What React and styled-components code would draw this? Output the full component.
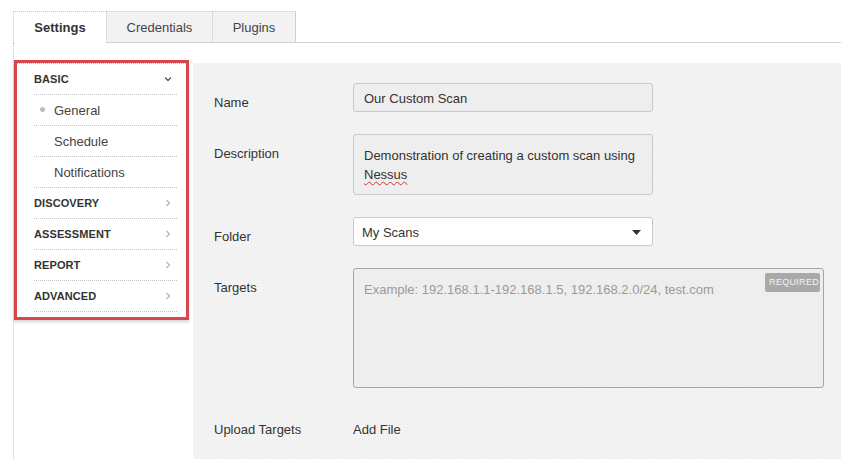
import React from 'react';
import styled, { createGlobalStyle } from 'styled-components';

const GlobalStyle = createGlobalStyle`
  html, body {
    margin: 0;
    padding: 0;
    background: #ffffff;
  }
  body {
    font-family: "Liberation Sans", Arial, Helvetica, sans-serif;
    color: #333;
  }
`;

const Page = styled.div`
  width: 841px;
  height: 459px;
  overflow: hidden;
  padding: 11px 0 0 13px;
  box-sizing: border-box;
  display: flex;
  flex-direction: column;
`;

const TabBar = styled.div`
  display: flex;
  height: 31px;
  border-bottom: 1px solid #d4d4d4;
  box-sizing: content-box;
`;

const Tab = styled.div`
  width: ${(p) => p.width}px;
  display: flex;
  align-items: center;
  justify-content: center;
  box-sizing: border-box;
  font-size: 13px;
  font-weight: ${(p) => (p.active ? 'bold' : 'normal')};
  color: ${(p) => (p.active ? '#333' : '#444')};
  background: ${(p) => (p.active ? '#fff' : '#f2f2f2')};
  border-top: 1px dotted #c8c8c8;
  border-left: 1px dotted #c8c8c8;
  border-right: ${(p) => (p.last ? '1px solid #d0d0d0' : 'none')};
  margin-bottom: ${(p) => (p.active ? '-1px' : '0')};
`;

const Body = styled.div`
  flex: 1;
  display: flex;
`;

const SideColumn = styled.div`
  width: 180px;
  border-left: 1px dotted #c8c8c8;
  padding-top: 17px;
  box-sizing: border-box;
`;

const Highlight = styled.div`
  width: 175px;
  border: 3px solid #d6474d;
  box-sizing: border-box;
  padding-bottom: 5px;
  background: #fff;
  box-shadow: 0 2px 3px rgba(0, 0, 0, 0.18);
`;

const PanelTop = styled.div`
  border-top: 1px dotted #bbb;
`;

const Row = styled.div`
  height: 30px;
  margin: 0 9px 0 17px;
  border-bottom: 1px dotted #c4c4c4;
  display: flex;
  align-items: center;
  justify-content: space-between;
  padding-left: ${(p) => (p.sub ? '20px' : '0')};
  padding-right: 5px;
  position: relative;
`;

const HeaderText = styled.span`
  font-size: 11px;
  font-weight: bold;
  color: #333;
  letter-spacing: 0.1px;
`;

const SubText = styled.span`
  font-size: 13px;
  color: #444;
`;

const Dot = styled.span`
  position: absolute;
  left: 6px;
  top: 12px;
  width: 5px;
  height: 5px;
  border-radius: 50%;
  background: #bdbdbd;
`;

const Main = styled.div`
  flex: 1;
  margin-top: 20px;
  background-color: #f3f3f3;
  background-image: radial-gradient(rgba(0, 0, 0, 0.025) 0.6px, transparent 0.8px);
  background-size: 3px 3px;
  padding: 20px 0 0 21px;
  display: flex;
  flex-direction: column;
  gap: 22px;
`;

const FieldRow = styled.div`
  display: flex;
  align-items: flex-start;
`;

const Label = styled.div`
  width: 139px;
  flex: none;
  font-size: 13px;
  line-height: 14px;
  padding-top: 13px;
  color: #333;
`;

const TextBox = styled.div`
  width: ${(p) => p.width || 300}px;
  height: ${(p) => p.height || 29}px;
  box-sizing: border-box;
  background: ${(p) => (p.white ? '#fff' : '#eeeeee')};
  border: 1px solid ${(p) => p.borderColor || '#c9c9c9'};
  border-radius: 3px;
  font-size: 13px;
  color: #333;
  padding: ${(p) => p.pad || '1px 10px 0'};
  line-height: ${(p) => p.lh || '28px'};
  position: relative;
  display: ${(p) => (p.flex ? 'flex' : 'block')};
  align-items: center;
  justify-content: space-between;
`;

const Spell = styled.span`
  text-decoration: underline wavy #d03030;
  text-decoration-thickness: 1px;
  text-underline-offset: 2px;
`;

const Placeholder = styled.span`
  color: #9a9a9a;
`;

const Badge = styled.span`
  position: absolute;
  top: 4px;
  right: 3px;
  display: block;
  background: #a9a9a9;
  color: #f4f4f4;
  font-size: 9px;
  line-height: 19px;
  height: 19px;
  padding: 0 1px 0 4px;
  border-radius: 2px;
  letter-spacing: 0.3px;
`;

const PlainValue = styled.div`
  font-size: 13px;
  line-height: 14px;
  padding-top: 13px;
  color: #333;
`;

const Chevron = ({ down }) => (
  <svg width="8" height="8" viewBox="0 0 8 8">
    {down ? (
      <polyline points="1,2.5 4,5.5 7,2.5" fill="none" stroke="#555" strokeWidth="1.3" />
    ) : (
      <polyline points="2.5,1 5.5,4 2.5,7" fill="none" stroke="#b0b0b0" strokeWidth="1.1" />
    )}
  </svg>
);

const Caret = () => (
  <svg width="9" height="5" viewBox="0 0 9 5">
    <polygon points="0,0 9,0 4.5,5" fill="#333" />
  </svg>
);

const sections = ['DISCOVERY', 'ASSESSMENT', 'REPORT', 'ADVANCED'];

export default function App() {
  return (
    <>
      <GlobalStyle />
      <Page>
        <TabBar>
          <Tab width={93} active>Settings</Tab>
          <Tab width={106}>Credentials</Tab>
          <Tab width={84} last>Plugins</Tab>
        </TabBar>
        <Body>
          <SideColumn>
            <Highlight>
              <PanelTop />
              <Row>
                <HeaderText>BASIC</HeaderText>
                <Chevron down />
              </Row>
              <Row sub>
                <Dot />
                <SubText>General</SubText>
              </Row>
              <Row sub>
                <SubText>Schedule</SubText>
              </Row>
              <Row sub>
                <SubText>Notifications</SubText>
              </Row>
              {sections.map((s) => (
                <Row key={s}>
                  <HeaderText>{s}</HeaderText>
                  <Chevron />
                </Row>
              ))}
            </Highlight>
          </SideColumn>
          <Main>
            <FieldRow>
              <Label>Name</Label>
              <TextBox>Our Custom Scan</TextBox>
            </FieldRow>
            <FieldRow>
              <Label>Description</Label>
              <TextBox height={61} pad="11px 10px 0" lh="19px">
                Demonstration of creating a custom scan using
                <br />
                <Spell>Nessus</Spell>
              </TextBox>
            </FieldRow>
            <FieldRow>
              <Label>Folder</Label>
              <TextBox white flex pad="2px 11px 0 8px">
                <span>My Scans</span>
                <Caret />
              </TextBox>
            </FieldRow>
            <FieldRow>
              <Label>Targets</Label>
              <TextBox width={471} height={120} borderColor="#a6a6a6" pad="11px 10px 0" lh="19px">
                <Placeholder>Example: 192.168.1.1-192.168.1.5, 192.168.2.0/24, test.com</Placeholder>
                <Badge>REQUIRED</Badge>
              </TextBox>
            </FieldRow>
            <FieldRow>
              <Label>Upload Targets</Label>
              <PlainValue>Add File</PlainValue>
            </FieldRow>
          </Main>
        </Body>
      </Page>
    </>
  );
}
